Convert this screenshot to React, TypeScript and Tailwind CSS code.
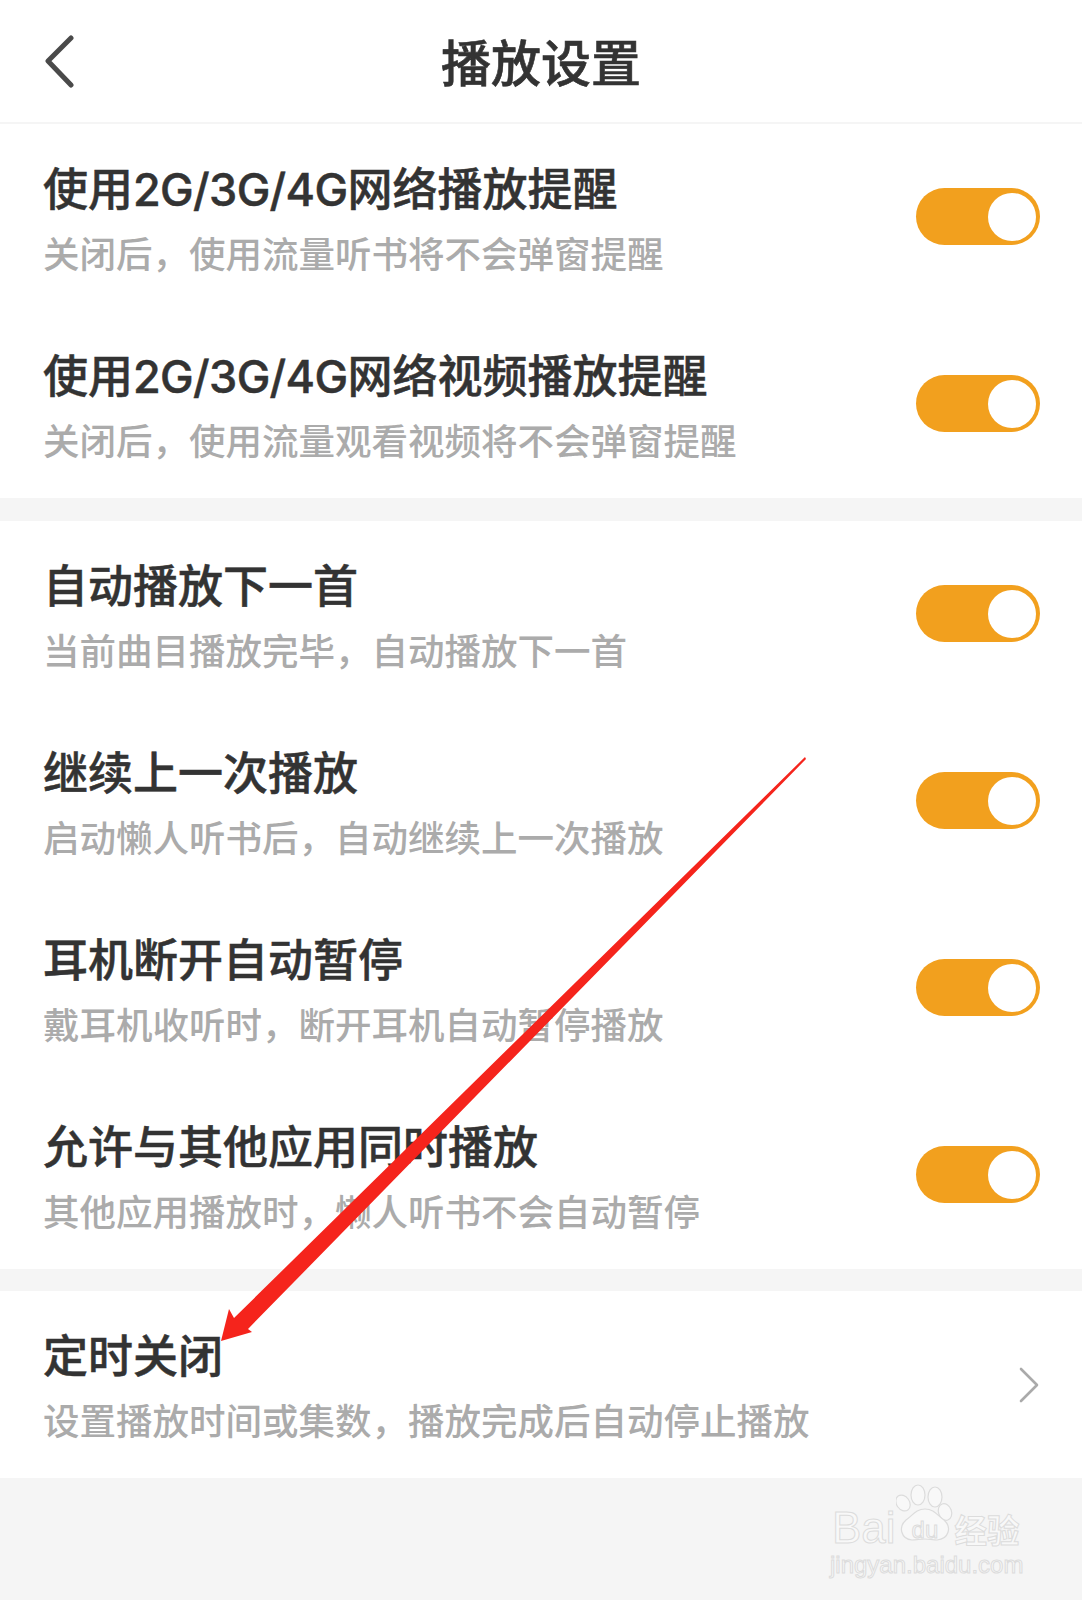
import type { ReactNode } from "react";

const network = <span className="tracking-[-0.65px]">2G/3G/4G</span>;

const firstGroup = [
  { title: <>使用{network}网络播放提醒</>, desc: "关闭后，使用流量听书将不会弹窗提醒" },
  { title: <>使用{network}网络视频播放提醒</>, desc: "关闭后，使用流量观看视频将不会弹窗提醒" },
];

const secondGroup = [
  { title: "自动播放下一首", desc: "当前曲目播放完毕，自动播放下一首" },
  { title: "继续上一次播放", desc: "启动懒人听书后，自动继续上一次播放" },
  { title: "耳机断开自动暂停", desc: "戴耳机收听时，断开耳机自动暂停播放" },
  { title: "允许与其他应用同时播放", desc: "其他应用播放时，懒人听书不会自动暂停" },
];

function Toggle() {
  return (
    <div className="mb-[2px] flex h-[57px] w-[124px] items-center justify-end rounded-full bg-[#f2a01e] pr-[4px]">
      <div className="h-[48px] w-[48px] rounded-full bg-white" />
    </div>
  );
}

function RowText({ title, desc }: { title: ReactNode; desc: string }) {
  return (
    <div className="pt-[8px]">
      <div className="whitespace-nowrap font-['Inter','Noto_Sans_CJK_SC',sans-serif] text-[45px] leading-[62px] font-medium text-[#333333] [-webkit-text-stroke:0.5px_#333333]">
        {title}
      </div>
      <div className="whitespace-nowrap text-[36.5px] leading-[64px] font-medium text-[#ababab]">{desc}</div>
    </div>
  );
}

function Row({ title, desc }: { title: ReactNode; desc: string }) {
  return (
    <div className="flex h-[187px] items-center justify-between pr-[42px] pl-[43px]">
      <RowText title={title} desc={desc} />
      <Toggle />
    </div>
  );
}

function Watermark() {
  const outline = "[-webkit-text-stroke:1px_#dcdcdc]";
  return (
    <div className="absolute top-[1484px] left-[830px] flex w-[196px] flex-col font-['Liberation_Sans',sans-serif] text-[#f8f8f8]">
      <div className="flex h-[66px] items-start pl-[2px]">
        <span className={`mt-[20px] text-[44px] leading-[48px] ${outline}`}>Bai</span>
        <div className="relative h-[66px] w-[59px] shrink-0">
          <svg width="59" height="66" viewBox="0 0 59 66" fill="#f8f8f8" stroke="#dcdcdc" strokeWidth="1.2">
            <ellipse cx="7" cy="19" rx="6.5" ry="8.5" transform="rotate(-35 7 19)" />
            <ellipse cx="22" cy="11" rx="7" ry="10" />
            <ellipse cx="39" cy="13" rx="7" ry="10" />
            <ellipse cx="49" cy="28" rx="6.5" ry="8.5" transform="rotate(-20 49 28)" />
            <path d="M29 25c9 0 12 6 19 11 8 7 5 19-7 20-4 0-8-1-12-1s-9 1-13 1C5 55 2 43 10 36c7-5 10-11 19-11z" />
          </svg>
          <span className={`absolute top-[34px] left-[16px] text-[24px] leading-[24px] ${outline}`}>du</span>
        </div>
        <span className={`mt-[25px] font-['Noto_Sans_CJK_SC',sans-serif] text-[32.5px] leading-[40px] font-bold ${outline}`}>经验</span>
      </div>
      <span className={`text-[24px] leading-[30px] whitespace-nowrap ${outline}`}>jingyan.baidu.com</span>
    </div>
  );
}

export default function App() {
  return (
    <div className="relative h-[1600px] w-[1082px] overflow-hidden bg-[#f5f5f5] font-['Noto_Sans_CJK_SC','Noto_Sans',sans-serif]">
      <header className="relative flex h-[124px] items-center justify-center border-b-2 border-[#f5f5f5] bg-white pb-[2px]">
        <svg className="absolute top-[35px] left-[43px]" width="34" height="54" viewBox="0 0 34 54" fill="none" stroke="#4a4a4a" strokeWidth="5" strokeLinecap="round" strokeLinejoin="round">
          <path d="M28 3 L5 26 L28 50" />
        </svg>
        <h1 className="text-[50px] leading-[64px] font-medium text-[#333333] [-webkit-text-stroke:0.6px_#333333]">播放设置</h1>
      </header>

      <section className="mb-[23px] bg-white">
        {firstGroup.map((r) => (
          <Row key={r.desc} title={r.title} desc={r.desc} />
        ))}
      </section>

      <section className="mb-[22px] bg-white">
        {secondGroup.map((r) => (
          <Row key={r.desc} title={r.title} desc={r.desc} />
        ))}
      </section>

      <section className="flex h-[187px] items-center justify-between bg-white px-[43px]">
        <RowText title="定时关闭" desc="设置播放时间或集数，播放完成后自动停止播放" />
        <svg width="20" height="36" viewBox="0 0 20 36" fill="none" stroke="#aaaaaa" strokeWidth="2.6" strokeLinecap="round" strokeLinejoin="round">
          <path d="M2 2 L18 18 L2 34" />
        </svg>
      </section>

      <Watermark />

      {/* red annotation arrow on top of the screenshot */}
      <svg className="absolute top-0 left-0" width="1082" height="1600" viewBox="0 0 1082 1600">
        <polygon points="221,1341 229,1309 234,1318 805,757 806,759 248,1329 252,1332" fill="#f5241c" />
      </svg>
    </div>
  );
}
